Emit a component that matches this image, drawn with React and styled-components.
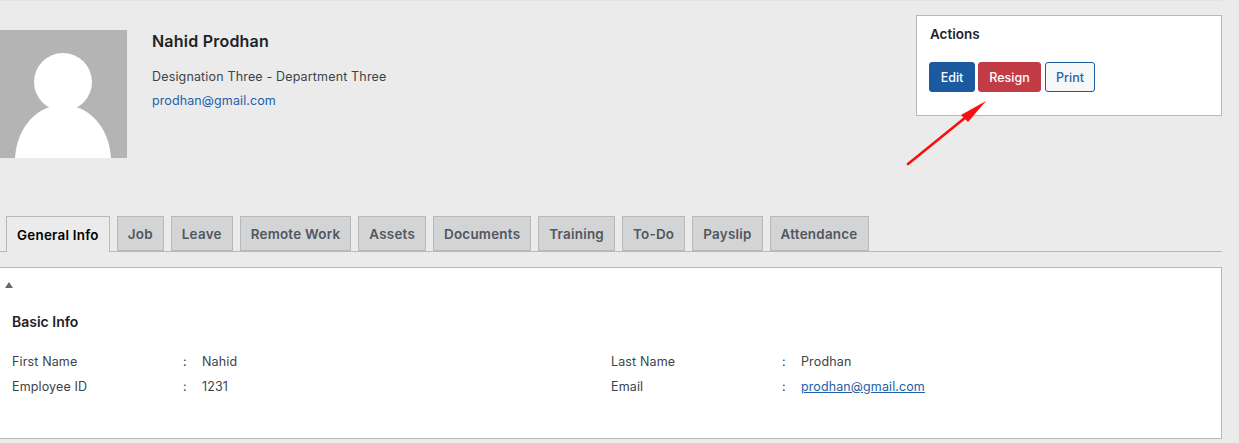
import React from "react";
import styled, { createGlobalStyle } from "styled-components";

const Global = createGlobalStyle`
  html, body { margin: 0; padding: 0; background: #ebebeb; }
  body { font-family: Inter, "Liberation Sans", sans-serif; color: #3c434a; font-size: 12.5px; overflow: hidden; }
`;
const Page = styled.div`
  width: 1222px; height: 443px; border-top: 1px solid #e4e4e4; box-sizing: border-box;
`;
const Header = styled.header`
  display: flex; justify-content: space-between; align-items: flex-start; height: 215px; padding-top: 14px; box-sizing: border-box;
`;
const Profile = styled.div`
  display: flex; gap: 25px; padding-top: 15px;
`;
const Avatar = styled.svg`
  display: block; width: 127px; height: 128px;
`;
const Name = styled.h1`
  margin: 2px 0 0; font-size: 16px; line-height: 19px; font-weight: 600; letter-spacing: .22px; color: #1d2327;
`;
const Role = styled.p`
  margin: 17px 0 0; font-size: 12.5px; line-height: 18px; letter-spacing: .16px;
`;
const Mail = styled.a`
  display: ${p => (p.$line ? "inline" : "block")}; margin-top: ${p => (p.$line ? 0 : 6)}px; font-size: 12.5px; line-height: 18px; letter-spacing: .11px; color: #1f5ea8;
  text-decoration: ${p => (p.$line ? "underline" : "none")};
`;
const ActionBox = styled.section`
  position: relative; width: 306px; height: 101px; box-sizing: border-box; background: #fff; border: 1px solid #b8b8b8; padding: 10px 12px;
`;
const BoxTitle = styled.h2`
  margin: 0; padding-left: 1px; font-size: 13.5px; line-height: 16px; font-weight: 600; color: #1d2327;
`;
const Buttons = styled.div`
  display: flex; gap: 3px; margin-top: 20px;
`;
const Btn = styled.button`
  height: 30px; box-sizing: border-box; border-radius: 3px; padding: 0; font: 500 12.5px Inter, sans-serif; width: ${p => p.$w}px;
  margin-left: ${p => p.$ml || 0}px;
  background: ${p => p.$bg}; color: ${p => p.$fg}; border: 1px solid ${p => p.$bd};
`;
const Arrow = styled.svg`
  position: absolute; left: -16px; top: 85px; width: 90px; height: 70px; overflow: visible;
`;
const TabBar = styled.nav`
  display: flex; gap: 7px; padding-left: 6px; height: 36px; box-sizing: border-box; border-bottom: 1px solid #b8b8b8; margin-bottom: 15px;
`;
const Tab = styled.div`
  height: ${p => (p.$active ? 36 : 35)}px; box-sizing: border-box; padding: 0 10px; display: flex; align-items: center; font-size: 13.4px; font-weight: 600; letter-spacing: .25px;
  border: 1px solid #b8b8b8; border-bottom: ${p => (p.$active ? "0" : "1px solid #b8b8b8")};
  background: ${p => (p.$active ? "#ebebeb" : "#d3d4d6")}; color: ${p => (p.$active ? "#000" : "#50575e")};
`;
const Panel = styled.section`
  height: 172px; box-sizing: border-box; background: #fff; border: 1px solid #b8b8b8; border-left: 0; padding: 14px 12px 0;
`;
const Caret = styled.div`
  width: 0; height: 0; margin-left: -7px; border-left: 4px solid transparent; border-right: 4px solid transparent; border-bottom: 6px solid #646970;
`;
const PanelTitle = styled.h3`
  margin: 26px 0 0; font-size: 14px; line-height: 16px; font-weight: 600; color: #1d2327;
`;
const Grid = styled.div`
  display: grid; grid-template-columns: 599px 1fr; margin-top: 23px; row-gap: 7px;
`;
const Field = styled.div`
  display: grid; grid-template-columns: 171px 19px 1fr; line-height: 18px; font-size: 12.5px; letter-spacing: .14px;
`;

const tabs = ["Job", "Leave", "Remote Work", "Assets", "Documents", "Training", "To-Do", "Payslip", "Attendance"];

export default function App() {
  return (
    <Page>
      <Global />
      <Header>
        <Profile>
          <Avatar viewBox="0 0 127 128">
            <rect width="127" height="128" fill="#b4b4b4" />
            <circle cx="63" cy="52" r="29" fill="#fff" />
            <path d="M15 128C17 96 38 75 63 75s46 21 48 53z" fill="#fff" />
          </Avatar>
          <div>
            <Name>Nahid Prodhan</Name>
            <Role>Designation Three - Department Three</Role>
            <Mail href="#">prodhan@gmail.com</Mail>
          </div>
        </Profile>
        <ActionBox>
          <BoxTitle>Actions</BoxTitle>
          <Buttons>
            <Btn $w={46} $bg="#1c5aa0" $fg="#fff" $bd="#1c5aa0">Edit</Btn>
            <Btn $w={63} $bg="#c13c44" $fg="#fff" $bd="#c13c44">Resign</Btn>
            <Btn $w={50} $ml={1} $bg="#f5f7f8" $fg="#2a62a5" $bd="#1c5aa0">Print</Btn>
          </Buttons>
          <Arrow viewBox="0 0 90 70">
            <path d="M7 63L65 16" stroke="#fa0f0f" strokeWidth="2.6" strokeLinecap="round" fill="none" />
            <path d="M85 0L60 14L67 21Z" fill="#fa0f0f" />
          </Arrow>
        </ActionBox>
      </Header>
      <TabBar>
        <Tab $active>General Info</Tab>
        {tabs.map(t => <Tab key={t}>{t}</Tab>)}
      </TabBar>
      <Panel>
        <Caret />
        <PanelTitle>Basic Info</PanelTitle>
        <Grid>
          <Field><span>First Name</span><span>:</span><span>Nahid</span></Field>
          <Field><span>Last Name</span><span>:</span><span>Prodhan</span></Field>
          <Field><span>Employee ID</span><span>:</span><span>1231</span></Field>
          <Field><span>Email</span><span>:</span><span><Mail href="#" $line>prodhan@gmail.com</Mail></span></Field>
        </Grid>
      </Panel>
    </Page>
  );
}
